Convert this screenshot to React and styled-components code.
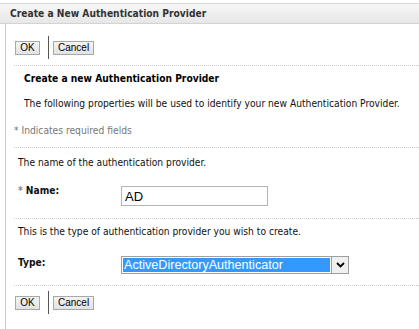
import React from 'react';
import styled, { createGlobalStyle } from 'styled-components';

const GlobalStyle = createGlobalStyle`
  body {
    margin: 0;
    background: #fff;
    font-family: "DejaVu Sans Condensed", "DejaVu Sans", Tahoma, sans-serif;
    font-size: 10.2px;
    color: #000;
  }
`;

const Page = styled.div`
  width: 419px;
  height: 329px;
  overflow: hidden;
  padding-top: 3px;
  box-sizing: border-box;
  display: flex;
  flex-direction: column;
`;

const Header = styled.div`
  height: 19px;
  border-top: 1px solid #d9d9d9;
  border-bottom: 1px solid #d3d3d3;
  background: linear-gradient(#f7f7f7, #e7e7e7);
  padding-left: 10px;
  display: flex;
  align-items: center;
  font-weight: bold;
  color: #333;
`;

const Body = styled.div`
  flex: 1;
  margin-left: 5px;
  border-left: 1px solid #c9c9c9;
  display: flex;
  flex-direction: column;
`;

const ButtonBar = styled.div`
  display: flex;
  align-items: center;
  height: 23px;
  margin-top: ${p => p.top}px;
  padding-left: 9px;
`;

const Button = styled.button`
  height: 14px;
  padding: 0 4px;
  margin: 0;
  border: 1px solid #a8a8a8;
  background: linear-gradient(#f4f4f4, #e2e2e2);
  font-family: "Liberation Sans", Arial, sans-serif;
  font-size: 10px;
  line-height: 12px;
  color: #000;
  box-sizing: border-box;
  width: ${p => p.w}px;
`;

const Divider = styled.span`
  width: 1px;
  height: 23px;
  background: #555;
  margin: 0 4px 0 8px;
`;

const Dotted = styled.div`
  margin: ${p => p.top}px 0 0 8px;
  border-top: 1px dotted #c8c8c8;
`;

const Text = styled.div`
  line-height: 13px;
  margin-top: ${p => p.top}px;
  padding-left: ${p => p.left}px;
  font-weight: ${p => (p.bold ? 'bold' : 'normal')};
  color: ${p => p.color || '#111'};
  white-space: nowrap;
`;

const Star = styled.span`
  color: #888;
  margin-right: 3px;
`;

const FieldRow = styled.div`
  display: flex;
  align-items: flex-start;
  margin-top: ${p => p.top}px;
  padding-left: 12px;
`;

const Label = styled.div`
  width: 103px;
  line-height: 13px;
  font-weight: bold;
  color: #111;
`;

const Input = styled.input`
  width: 147px;
  height: 20px;
  margin: 2px 0 0 0;
  padding: 0 3px;
  box-sizing: border-box;
  border: 1px solid #b4b4b4;
  font-family: "Liberation Sans", Arial, sans-serif;
  font-size: 13px;
  color: #000;
  outline: none;
`;

const Select = styled.div`
  display: flex;
  width: 228px;
  height: 18px;
  box-sizing: border-box;
  border: 1px solid #a0a0a0;
  background: #fff;
`;

const Selected = styled.div`
  flex: 1;
  margin: 1px;
  background: #3399ff;
  color: #fff;
  font-family: "Liberation Sans", Arial, sans-serif;
  font-size: 12.6px;
  line-height: 14px;
  padding-left: 1px;
`;

const Arrow = styled.div`
  width: 16px;
  border-left: 1px solid #a0a0a0;
  background: #f0f0f0;
  display: flex;
  align-items: center;
  justify-content: center;
`;

export default function App() {
  return (
    <>
      <GlobalStyle />
      <Page>
        <Header>Create a New Authentication Provider</Header>
        <Body>
          <ButtonBar top={12}>
            <Button w={25}>OK</Button>
            <Divider />
            <Button w={41}>Cancel</Button>
          </ButtonBar>
          <Dotted top={6} />
          <Text top={6} left={18} bold color="#000">Create a new Authentication Provider</Text>
          <Text top={12} left={18}>The following properties will be used to identify your new Authentication Provider.</Text>
          <Text top={14} left={8} color="#777">* Indicates required fields</Text>
          <Dotted top={10} />
          <Text top={8} left={12}>The name of the authentication provider.</Text>
          <FieldRow top={15}>
            <Label><Star>*</Star>Name:</Label>
            <Input value="AD" readOnly />
          </FieldRow>
          <Dotted top={12} />
          <Text top={6} left={12}>This is the type of authentication provider you wish to create.</Text>
          <FieldRow top={18}>
            <Label>Type:</Label>
            <Select>
              <Selected>ActiveDirectoryAuthenticator</Selected>
              <Arrow>
                <svg width="9" height="6" viewBox="0 0 9 6">
                  <path d="M1 1 L4.5 4.5 L8 1" fill="none" stroke="#000" strokeWidth="1.8" />
                </svg>
              </Arrow>
            </Select>
          </FieldRow>
          <Dotted top={11} />
          <ButtonBar top={5}>
            <Button w={25}>OK</Button>
            <Divider />
            <Button w={41}>Cancel</Button>
          </ButtonBar>
        </Body>
      </Page>
    </>
  );
}
